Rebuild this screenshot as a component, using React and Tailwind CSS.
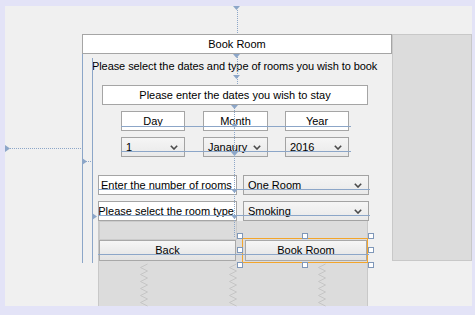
import React from 'react';

const BLUE = '#8ca6c8';

function Chevron() {
  return (
    <svg width="8" height="5" viewBox="0 0 8 5" className="shrink-0">
      <polyline points="0.8,0.8 4,4 7.2,0.8" fill="none" stroke="#4a4a4a" strokeWidth="1.6" />
    </svg>
  );
}

function Combo({ label, className }) {
  return (
    <div
      className={`h-[20px] border border-[#a3a3a3] bg-gradient-to-b from-[#f5f5f5] to-[#e9e9e9] flex items-center justify-between pl-[4px] pr-[6px] leading-[18px] ${className}`}
    >
      <span>{label}</span>
      <Chevron />
    </div>
  );
}

function Box({ children, className }) {
  return (
    <div className={`h-[20px] border border-[#a5a5a5] bg-white text-center leading-[19px] ${className}`}>{children}</div>
  );
}

// designer overlay: anchors, guides, selection handles, gap springs
const solid = [
  [82.5, 54, 82.5, 263],
  [92.5, 58, 92.5, 263],
  [121, 126.5, 351, 126.5],
  [121, 151.5, 351, 151.5],
  [98, 189.5, 370, 189.5],
  [98, 215.5, 370, 215.5],
  [98, 254.5, 369, 254.5],
];
const dotted = [
  [237.5, 10, 237.5, 34],
  [237.5, 57, 237.5, 85],
  [234.5, 108, 234.5, 238],
  [10, 148.5, 82, 148.5],
  [86, 161.5, 92, 161.5],
];
const downs = [
  [233, 6], [233, 54], [233, 75], [231, 105], [231, 124], [231, 152], [231, 189], [231, 215],
];
const rights = [
  [5, 145], [82, 158], [92, 213],
];
const handles = [
  [237, 233], [302, 233], [368, 233], [237, 247], [368, 247], [237, 262], [302, 262], [368, 262],
];
const springs = [140, 229, 318];

function Overlay() {
  const zig = (x) => {
    const pts = [];
    for (let i = 0; i <= 12; i++) pts.push(`${x + (i % 2 === 0 ? 7.5 : 0.5)},${264 + i * 3.5}`);
    return pts.join(' ');
  };
  return (
    <svg className="absolute inset-0 pointer-events-none" width="475" height="315">
      {springs.map((x) => (
        <polyline key={x} points={zig(x)} fill="none" stroke="#c6c6c6" strokeWidth="1" />
      ))}
      {solid.map(([a, b, c, d], i) => (
        <line key={`s${i}`} x1={a} y1={b} x2={c} y2={d} stroke={BLUE} strokeWidth="1" />
      ))}
      {dotted.map(([a, b, c, d], i) => (
        <line key={`d${i}`} x1={a} y1={b} x2={c} y2={d} stroke={BLUE} strokeWidth="1" strokeDasharray="1 1" />
      ))}
      {downs.map(([x, y], i) => (
        <polygon key={`v${i}`} points={`${x},${y} ${x + 7},${y} ${x + 3.5},${y + 4}`} fill={BLUE} />
      ))}
      {rights.map(([x, y], i) => (
        <polygon key={`r${i}`} points={`${x},${y} ${x + 5},${y + 3.5} ${x},${y + 7}`} fill={BLUE} />
      ))}
      {handles.map(([x, y], i) => (
        <rect key={`h${i}`} x={x + 0.5} y={y + 0.5} width="5" height="5" fill="#fff" stroke="#7f97b8" strokeWidth="1" />
      ))}
    </svg>
  );
}

export default function App() {
  return (
    <div className="relative w-[475px] h-[315px] bg-[#e3e3f7] pt-[6px] pl-[5px] overflow-hidden font-['Liberation_Sans',Arial,sans-serif] text-[11px] text-black">
      <div className="w-[467px] h-[300px] bg-[#f0f0f0] flex items-start pt-[28px] pl-[77px]">
        {/* form */}
        <div className="w-[310px] flex flex-col">
          <div className="h-[20px] border border-[#a5a5a5] bg-white text-center leading-[18px]">Book Room</div>
          <div className="mt-[5px] pl-[10px] h-[14px] leading-[14px] whitespace-nowrap tracking-[-0.08px]">
            Please select the dates and type of rooms you wish to book
          </div>
          <Box className="mt-[12px] ml-[20px] w-[266px] leading-[18px]">Please enter the dates you wish to stay</Box>
          <div className="mt-[6px] ml-[39px] flex gap-[17px]">
            <Box className="w-[64px] mr-px">Day</Box>
            <Box className="w-[65px]">Month</Box>
            <Box className="w-[64px]">Year</Box>
          </div>
          <div className="mt-[6px] ml-[39px] flex gap-[17px]">
            <Combo label="1" className="w-[64px] mr-px" />
            <Combo label="Janaury" className="w-[65px]" />
            <Combo label="2016" className="w-[64px]" />
          </div>
          <div className="mt-[18px] ml-[16px] flex gap-[6px]">
            <div className="w-[139px] h-[20px] border border-[#a5a5a5] bg-white pl-[2px] leading-[18px] whitespace-nowrap overflow-hidden">
              Enter the number of rooms
            </div>
            <Combo label="One Room" className="w-[126px]" />
          </div>
          <div className="mt-[6px] ml-[16px] flex gap-[6px]">
            <div className="w-[139px] h-[20px] border border-[#a5a5a5] bg-white flex justify-end pr-[3px] leading-[18px] whitespace-nowrap overflow-hidden">
              <span className="shrink-0 -mr-px">Please select the room type</span>
            </div>
            <Combo label="Smoking" className="w-[126px]" />
          </div>
          <div className="ml-[16px] w-[270px] h-[85px] bg-[#dcdcdc] border-x border-[#c8c8c8] flex gap-[5px]">
            <div className="w-[139px] flex flex-col">
              <div className="w-[138px] h-[19px] border border-[#cbcbcb]" />
              <div className="w-[137px] h-[21px] border border-[#a8a8a8] bg-gradient-to-b from-[#f6f6f6] to-[#e2e2e2] text-center leading-[19px]">
                Back
              </div>
            </div>
            <div className="mt-[17px] w-[127px] h-[25px] border border-[#f3a52b] pt-[1px] pl-[2px]">
              <div className="w-[122px] h-[21px] border border-[#a8a8a8] bg-gradient-to-b from-[#f6f6f6] to-[#e2e2e2] text-center leading-[19px]">
                Book Room
              </div>
            </div>
          </div>
        </div>
        {/* side panel */}
        <div className="w-[80px] h-[227px] bg-[#dcdcdc] border border-[#c8c8c8]" />
      </div>
      <Overlay />
    </div>
  );
}
